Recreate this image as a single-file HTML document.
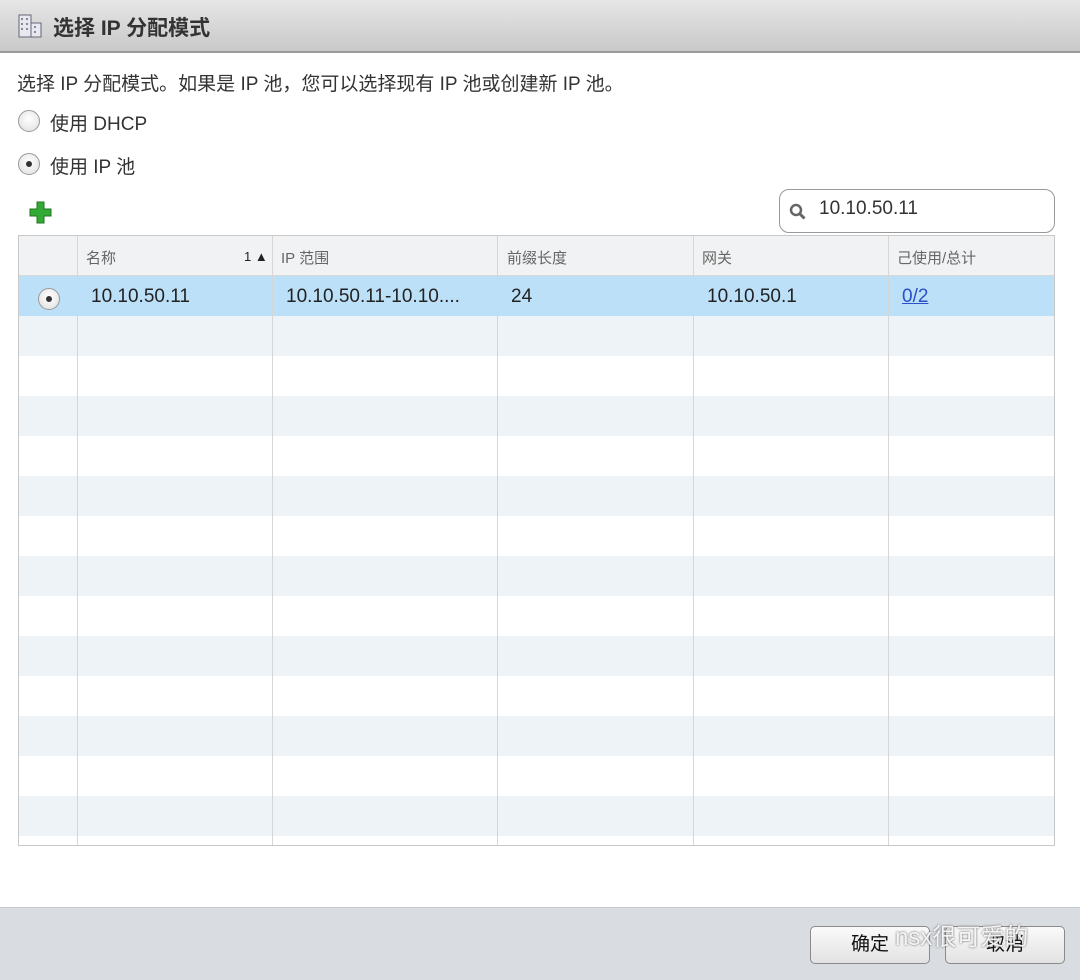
<!DOCTYPE html>
<html><head><meta charset="utf-8"><style>
*{margin:0;padding:0;box-sizing:border-box}
body{width:1080px;height:980px;background:#fff;font-family:"Liberation Sans","Noto Sans CJK SC",sans-serif;position:relative;overflow:hidden;color:#222}
.title{position:absolute;left:0;top:0;width:1080px;height:53px;background:linear-gradient(#e6e6e6,#c9c9c9);border-bottom:2px solid #9a9a9a}
.title span{position:absolute;left:53px;top:12px;font-size:21px;font-weight:bold;color:#333}
.t{position:absolute;font-size:19px;color:#333;white-space:nowrap}
.radio{position:absolute;width:22px;height:22px;border-radius:50%;border:1px solid #999;background:radial-gradient(circle at 50% 40%,#fff,#ddd)}
.radio.on::after{content:"";position:absolute;left:7px;top:7px;width:6px;height:6px;border-radius:50%;background:#333}
.grid{position:absolute;left:18px;top:235px;width:1037px;height:611px;border:1px solid #c8c8c8;overflow:hidden}
.hdr{position:absolute;left:0;top:0;width:100%;height:40px;background:#f1f2f3;border-bottom:1px solid #d8d8d8}
.row{position:absolute;left:0;width:100%;height:40px}
.vl{position:absolute;top:0;width:1px;height:100%;background:#d6d6d6}
.h{position:absolute;top:11px;font-size:15px;color:#666}
.c{position:absolute;top:50px;font-size:19px;color:#222}
.footer{position:absolute;left:0;top:907px;width:1080px;height:73px;background:#d9dde2;border-top:1px solid #c4c8cc}
.btn{position:absolute;top:926px;height:38px;width:120px;border:1px solid #8a8a8a;border-radius:5px;background:linear-gradient(#fafafa,#e2e2e2);font-size:19px;text-align:center;line-height:36px;color:#111}
</style></head><body>
<div class="title">
<svg style="position:absolute;left:17px;top:13px" width="26" height="26" viewBox="0 0 26 26"><rect x="2" y="2" width="12" height="22" fill="#e8e8f0" stroke="#667" stroke-width="1"/><rect x="14" y="10" width="10" height="14" fill="#e8e8f0" stroke="#667"/><g fill="#889"><rect x="4" y="5" width="2" height="2"/><rect x="9" y="5" width="2" height="2"/><rect x="4" y="10" width="2" height="2"/><rect x="9" y="10" width="2" height="2"/><rect x="4" y="15" width="2" height="2"/><rect x="9" y="15" width="2" height="2"/><rect x="17" y="13" width="2" height="2"/><rect x="17" y="18" width="2" height="2"/></g></svg>
<span>选择 IP 分配模式</span></div>
<div class="t" style="left:17px;top:69px">选择 IP 分配模式。如果是 IP 池，您可以选择现有 IP 池或创建新 IP 池。</div>
<div class="radio" style="left:18px;top:110px"></div><div class="t" style="left:50px;top:109px">使用 DHCP</div>
<div class="radio on" style="left:18px;top:153px"></div><div class="t" style="left:50px;top:152px">使用 IP 池</div>
<svg style="position:absolute;left:29px;top:201px" width="24" height="24" viewBox="0 0 24 24"><path d="M8 1h7v7h7v7h-7v7H8v-7H1V8h7z" fill="#3a3" stroke="#272" stroke-width="1"/></svg>
<div style="position:absolute;left:779px;top:189px;width:276px;height:44px;border:1px solid #999;border-radius:10px;background:#fff"></div>
<svg style="position:absolute;left:789px;top:203px" width="18" height="18" viewBox="0 0 18 18"><circle cx="7" cy="7" r="5" fill="none" stroke="#666" stroke-width="2.5"/><path d="M10.5 10.5l5 5" stroke="#666" stroke-width="3"/></svg>
<div class="t" style="left:819px;top:198px">10.10.50.11</div>
<div class="grid">
<div class="hdr"></div>
<div class="row" style="top:40px;background:#bde0f9"></div>
<div class="row" style="top:80px;background:#eef3f8"></div>
<div class="row" style="top:160px;background:#eef3f8"></div>
<div class="row" style="top:240px;background:#eef3f8"></div>
<div class="row" style="top:320px;background:#eef3f8"></div>
<div class="row" style="top:400px;background:#eef3f8"></div>
<div class="row" style="top:480px;background:#eef3f8"></div>
<div class="row" style="top:560px;background:#eef3f8"></div>
<div class="vl" style="left:58px"></div><div class="vl" style="left:253px"></div><div class="vl" style="left:478px"></div><div class="vl" style="left:674px"></div><div class="vl" style="left:869px"></div>
<div class="h" style="left:67px">名称</div><div class="h" style="left:225px;color:#222;font-size:13px;top:13px">1 ▲</div>
<div class="h" style="left:262px">IP 范围</div><div class="h" style="left:488px">前缀长度</div><div class="h" style="left:683px">网关</div><div class="h" style="left:878px">己使用/总计</div>
<div class="radio on" style="left:19px;top:52px"></div>
<div class="c" style="left:72px">10.10.50.11</div>
<div class="c" style="left:267px">10.10.50.11-10.10....</div>
<div class="c" style="left:492px">24</div>
<div class="c" style="left:688px">10.10.50.1</div>
<div class="c" style="left:883px;color:#2a4fc8;text-decoration:underline">0/2</div>
</div>
<div class="footer"></div>
<div class="btn" style="left:810px">确定</div>
<div class="btn" style="left:945px">取消</div>
<div class="t" style="left:895px;top:917px;color:rgba(255,255,255,.9);font-size:24px;text-shadow:0 0 2px #555">nsx很可爱的</div>
</body></html>
